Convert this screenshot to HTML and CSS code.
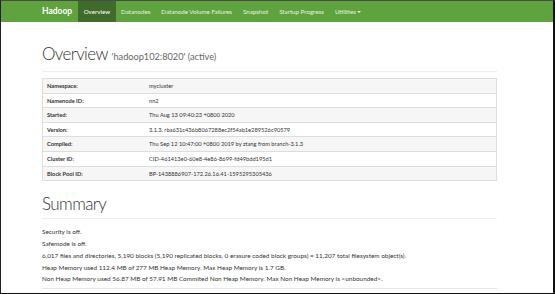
FILE: index.html
```html
<!DOCTYPE html>
<html lang="en">
<head>
    <meta charset="UTF-8">
    <meta name="viewport" content="width=device-width, initial-scale=1.0">
    <title>Namenode information</title>
    <link rel="stylesheet" href="styles.css">
</head>
<body>
    <div class="frame">
        <div class="navbar">
            <span class="brand">Hadoop</span>
            <ul class="nav">
                <li class="active">Overview</li>
                <li>Datanodes</li>
                <li>Datanode Volume Failures</li>
                <li>Snapshot</li>
                <li>Startup Progress</li>
                <li>Utilities <span class="caret"></span></li>
            </ul>
        </div>

        <div class="container">
            <div class="page-header">
                <h1>Overview <small>'hadoop102:8020' (active)</small></h1>
            </div>

            <table class="info">
                <tr><th>Namespace:</th><td>mycluster</td></tr>
                <tr><th>Namenode ID:</th><td>nn2</td></tr>
                <tr><th>Started:</th><td>Thu Aug 13 09:40:23 +0800 2020</td></tr>
                <tr><th>Version:</th><td>3.1.3, rba631c436b8067288ec2f54ab1e289526c90579</td></tr>
                <tr><th>Compiled:</th><td>Thu Sep 12 10:47:00 +0800 2019 by ztang from branch-3.1.3</td></tr>
                <tr><th>Cluster ID:</th><td>CID-461413e0-60e8-4e86-8699-fd49bdd195d1</td></tr>
                <tr><th>Block Pool ID:</th><td>BP-1438886907-172.26.16.41-1595295305436</td></tr>
            </table>

            <div class="page-header summary">
                <h1>Summary</h1>
            </div>

            <div class="summary-text">
                <p>Security is off.</p>
                <p>Safemode is off.</p>
                <p>6,017 files and directories, 5,190 blocks (5,190 replicated blocks, 0 erasure coded block groups) = 11,207 total filesystem object(s).</p>
                <p>Heap Memory used 112.4 MB of 277 MB Heap Memory. Max Heap Memory is 1.7 GB.</p>
                <p>Non Heap Memory used 56.87 MB of 57.91 MB Commited Non Heap Memory. Max Non Heap Memory is &lt;unbounded&gt;.</p>
            </div>
            <div class="next-table"></div>
        </div>
    </div>
</body>
</html>
```

FILE: styles.css
```css
body{
    margin:0;
    padding:0;
    font-family: Lato, "Open Sans", sans-serif;
    color:#333;
    background:#fff;
}
.frame{
    box-sizing: border-box;
    width:555px;
    height:294px;
    overflow: hidden;
    border-top:1px solid #4a4a4a;
    border-left:1px solid #222;
    border-right:2px solid #111;
    border-bottom:1px solid #111;
}
.navbar{
    height:21px;
    background:#5fa33e;
    display: flex;
    align-items: stretch;
    padding-left:41px;
}
.brand{
    color:#fff;
    font-weight:700;
    font-size:8.5px;
    line-height:21px;
    margin-right:6px;
}
.nav{
    list-style: none;
    margin:0;
    padding:0;
    display: flex;
}
.nav li{
    color:#e8f2e2;
    font-size:6.2px;
    line-height:21px;
    padding:0 5.5px;
}
.nav li.active{
    background:#3f6b2b;
    color:#fff;
}
.caret{
    display: inline-block;
    width:0;
    height:0;
    border-top:2px solid #e8f2e2;
    border-left:2px solid transparent;
    border-right:2px solid transparent;
    vertical-align: middle;
}
.container{
    padding:0 56px 0 41px;
}
.page-header{
    margin-top:22px;
    padding-bottom:5px;
    border-bottom:1px solid #eee;
}
.page-header h1{
    margin:0;
    font-size:17px;
    font-weight:300;
    line-height:19px;
    letter-spacing:-0.6px;
    color:#333;
}
.page-header small{
    font-size:9.2px;
    font-weight:400;
    letter-spacing:0;
    color:#666;
}
.info{
    margin-top:6px;
    width:100%;
    border-collapse: collapse;
    border:1px solid #ddd;
    font-size:5.7px;
}
.info th, .info td{
    text-align: left;
    border-top:1px solid #ddd;
    padding:0 4px;
    height:13.6px;
    line-height:13.6px;
}
.info th{
    width:94px;
    font-weight:700;
}
.info tr:nth-child(odd){
    background:#f6f6f6;
}
.summary{
    margin-top:13px;
}
.summary-text{
    margin-top:7px;
    font-size:6.4px;
}
.summary-text p{
    margin:0;
    line-height:11.8px;
}
.next-table{
    margin-top:3px;
    border-top:1px solid #e6e6e6;
}
```
